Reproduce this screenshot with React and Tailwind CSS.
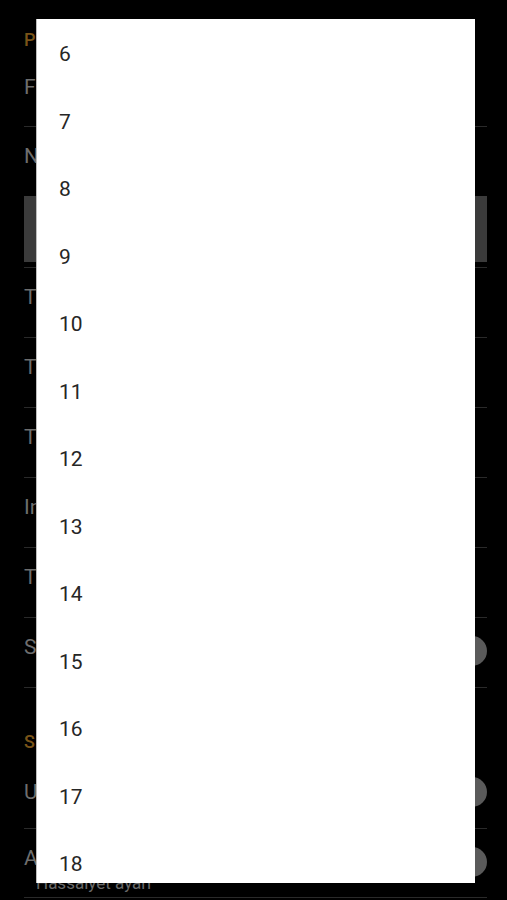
import React from "react";

const rowLabels = ["T", "T", "T", "In", "T"];
const numbers = [6, 7, 8, 9, 10, 11, 12, 13, 14, 15, 16, 17, 18];

function Thumb() {
  return <span className="block w-[30px] h-[30px] rounded-full bg-[#5a5a5a]" />;
}

export default function App() {
  return (
    <div
      className="relative w-[507px] h-[900px] bg-black overflow-hidden"
      style={{ fontFamily: "Roboto, 'Noto Sans', sans-serif" }}
    >
      {/* dimmed settings screen behind the dialog */}
      <div className="pl-[24px] pr-[20px]">
        <div className="h-[52px] pt-[28px] text-[18px] leading-[24px] font-medium text-[#7a5418]">
          P
        </div>
        <div className="h-[75px] pt-[21px] text-[21px] leading-[28px] text-[#6e6e6e] border-b border-[#2a2a2a]">
          F
        </div>
        <div className="h-[141px] pt-[15px] flex flex-col border-b border-[#2a2a2a]">
          <div className="text-[21px] leading-[28px] text-[#6e6e6e]">N</div>
          <div className="mt-[26px] h-[66px] bg-[#3b3b3b]" />
        </div>
        {rowLabels.map((l, i) => (
          <div
            key={i}
            className="h-[70px] pt-[15px] text-[21px] leading-[28px] text-[#6e6e6e] border-b border-[#2a2a2a]"
          >
            {l}
          </div>
        ))}
        <div className="relative h-[70px] pt-[15px] text-[21px] leading-[28px] text-[#6e6e6e] border-b border-[#2a2a2a]">
          S
          <div className="absolute right-0 top-[18px]">
            <Thumb />
          </div>
        </div>
        <div className="h-[74px] pt-[42px] text-[18px] leading-[24px] font-medium text-[#7a5418]">
          S
        </div>
        <div className="relative h-[67px] pt-[16px] text-[21px] leading-[28px] text-[#6e6e6e] border-b border-[#2a2a2a]">
          U
          <div className="absolute right-0 top-[15px]">
            <Thumb />
          </div>
        </div>
        <div className="relative h-[69px] pt-[15px] border-b border-[#2a2a2a]">
          <div className="text-[21px] leading-[28px] text-[#6e6e6e]">A</div>
          <div className="pl-[12px] mt-[1px] text-[17px] leading-[20px] text-[#6a6a6a]">Hassaiyet ayarı</div>
          <div className="absolute right-0 top-[18px]">
            <Thumb />
          </div>
        </div>
      </div>

      {/* number picker dialog */}
      <div className="absolute left-[36px] top-[19px] w-[439px] h-[864px] bg-white overflow-hidden border-l border-[#bdbdbd]">
        {numbers.map((n) => (
          <div
            key={n}
            className="h-[67.5px] shrink-0 flex items-center pl-[22px] pt-[4px] text-[21px] text-[#262626]"
          >
            {n}
          </div>
        ))}
      </div>
    </div>
  );
}
